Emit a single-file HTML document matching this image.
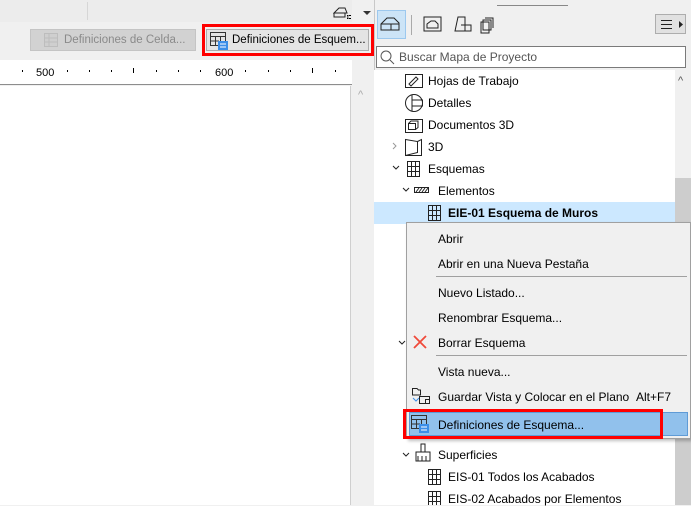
<!DOCTYPE html>
<html><head><meta charset="utf-8"><style>
*{margin:0;padding:0;box-sizing:border-box}
body{width:691px;height:505px;overflow:hidden;background:#f0f0f0;font-family:"Liberation Sans",sans-serif;font-size:12px;color:#000;position:relative}
.a{position:absolute}
.t{position:absolute;white-space:nowrap;line-height:14px}
.tick{position:absolute;top:70px;width:1px;height:2px;background:#000}
.mi{position:absolute;left:438px;white-space:nowrap;line-height:14px}
</style></head><body>
<div class="a" style="left:0;top:0;width:352px;height:22px;background:#ececec"></div>
<div class="a" style="left:87px;top:2px;width:1px;height:18px;background:#d6d6d6"></div>
<svg class="a" style="left:333px;top:4px" width="40" height="16"><path d="M1 9 L6 4 L12 4 L14 9 Z M1 9 V13 H12 V9" fill="none" stroke="#222"/><rect x="14" y="11" width="1.5" height="1.5"/><rect x="14" y="13.5" width="1.5" height="1.5"/><rect x="16" y="11" width="2" height="1"/><rect x="16" y="14" width="2" height="1"/><path d="M30 7 H38 L34 11Z" fill="#333"/></svg>
<div class="a" style="left:30px;top:29px;width:166px;height:22px;background:#d2d2d2;border:1px solid #c4c4c4"></div>
<svg class="a" style="left:44px;top:33px" width="14" height="14"><g fill="#cfcfcf" stroke="#bdbdbd"><rect x="0.5" y="0.5" width="13" height="13"/></g><path d="M0 5H14M0 9H14M5 0V14" stroke="#bdbdbd"/></svg>
<div class="t" style="left:64px;top:33px;color:#8a8a8a;font-size:11.5px">Definiciones de Celda...</div>
<div class="a" style="left:202px;top:24px;width:172px;height:32px;border:3px solid #f00"></div>
<div class="a" style="left:206px;top:29px;width:163px;height:22px;background:#e4e4e4;border:1px solid #adadad"></div>
<svg class="a" style="left:210px;top:32px" width="18" height="18"><rect x="0.5" y="0.5" width="15" height="13" fill="none" stroke="#333"/><path d="M0.5 4.5H15.5M0.5 9H9M5.5 4.5V13.5M10.5 4.5V9" stroke="#333"/><rect x="8" y="9" width="10" height="9" fill="#3b8ee8"/><path d="M10 12H16M10 15H16" stroke="#fff"/></svg>
<div class="t" style="left:232px;top:33px;font-size:11.5px">Definiciones de Esquem...</div>
<div class="a" style="left:0;top:60px;width:352px;height:25px;background:#fff;border-bottom:1px solid #8d8d8d"></div>
<div class="tick" style="left:22px"></div><div class="tick" style="left:67px"></div><div class="tick" style="left:89px"></div><div class="tick" style="left:111px"></div><div class="a" style="left:133px;top:68px;width:1px;height:5px;background:#000"></div><div class="tick" style="left:156px"></div><div class="tick" style="left:178px"></div><div class="tick" style="left:200px"></div><div class="tick" style="left:245px"></div><div class="tick" style="left:268px"></div><div class="tick" style="left:290px"></div><div class="a" style="left:312px;top:68px;width:1px;height:5px;background:#000"></div><div class="tick" style="left:335px"></div>
<div class="t" style="left:36px;top:66px;font-size:11px">500</div>
<div class="t" style="left:215px;top:66px;font-size:11px">600</div>
<div class="a" style="left:0;top:86px;width:351px;height:419px;background:#fff;border-right:1px solid #cfcfcf"></div>
<div class="t" style="left:358px;top:88px;color:#aaa;font-size:11px">^</div>
<div class="a" style="left:374px;top:0;width:317px;height:505px;background:#f0f0f0;border-left:1px solid #c8c8c8"></div>
<div class="a" style="left:497px;top:5px;width:71px;height:1px;background:#888"></div>
<div class="a" style="left:377px;top:10px;width:29px;height:29px;background:#cce4f7;border:1px solid #9cc8ee"></div>
<svg class="a" style="left:380px;top:16px" width="22" height="16"><path d="M1 8L7 2H14L19 7V14H1Z M1 8H19 M11 8V14" fill="none" stroke="#222"/></svg>
<div class="a" style="left:411px;top:15px;width:1px;height:20px;background:#aaa"></div>
<svg class="a" style="left:423px;top:16px" width="80" height="18"><rect x="1" y="1" width="17" height="14" fill="none" stroke="#222"/><path d="M4 12V8L8 5H12L15 8V12Z" fill="none" stroke="#222"/><path d="M32 15L35 1H42V15Z M35 15H48V9H38" fill="none" stroke="#222"/><path d="M60 4H68V14H60Z M62 2H70V12 M58 6H66V17H58Z" fill="#f0f0f0" stroke="#222"/></svg>
<div class="a" style="left:655px;top:14px;width:31px;height:20px;background:#e1e1e1;border:1px solid #adadad"></div>
<svg class="a" style="left:660px;top:19px" width="24" height="12"><path d="M1 1.5H12M1 5.5H12M1 9.5H12" stroke="#222"/><path d="M19 2L23 5.5L19 9Z" fill="#222"/></svg>
<div class="a" style="left:376px;top:46px;width:310px;height:22px;background:#fff;border:1px solid #7a7a7a"></div>
<svg class="a" style="left:380px;top:50px" width="16" height="16"><circle cx="6" cy="6" r="5" fill="none" stroke="#555"/><path d="M10 10L14 14" stroke="#555"/></svg>
<div class="t" style="left:399px;top:50px;color:#555">Buscar Mapa de Proyecto</div>
<div class="a" style="left:374px;top:70px;width:301px;height:435px;background:#fff"></div>
<div class="a" style="left:675px;top:70px;width:16px;height:435px;background:#f0f0f0"></div>
<div class="a" style="left:675px;top:178px;width:16px;height:327px;background:#cdcdcd"></div>
<div class="t" style="left:678px;top:74px;color:#555;font-size:11px">^</div>
<div class="a" style="left:374px;top:202px;width:301px;height:22px;background:#cce8ff"></div>
<svg class="a" style="left:390px;top:70px" width="60" height="435" fill="none" stroke="#222">
<rect x="15.5" y="4.5" width="17" height="13"/><path d="M19 14L26 7L28 9L21 16Z"/>
<circle cx="24" cy="33" r="8.5"/><path d="M22 24.5V41.5M22 30H32.5V36H22"/>
<rect x="15.5" y="49.5" width="17" height="13"/><rect x="18.5" y="53.5" width="7" height="6"/><path d="M18.5 53.5L21 51H28V57.5L25.5 59.5"/>
<path d="M3 73L6 76L3 79" stroke="#999"/><path d="M15.5 69.5L27.5 71.5V82.5L15.5 85.5Z M27.5 71.5L31.5 69.5V85.5L15.5 85.5"/>
<path d="M3 96L6 99L9 96"/><rect x="17.5" y="91.5" width="12" height="15"/><path d="M17.5 96.5H29.5M17.5 101.5H29.5M21.5 91.5V106.5M25.5 91.5V106.5"/>
<path d="M13 118L16 121L19 118"/><rect x="24.5" y="117.5" width="14" height="5"/><path d="M26 122L29 118M29 122L32 118M32 122L35 118M35 122L38 118"/>
<rect x="38.5" y="135.5" width="12" height="15"/><path d="M38.5 140.5H50.5M38.5 145.5H50.5M42.5 135.5V150.5M46.5 135.5V150.5"/>
</svg>
<div class="t" style="left:428px;top:74px">Hojas de Trabajo</div>
<div class="t" style="left:428px;top:96px">Detalles</div>
<div class="t" style="left:428px;top:118px">Documentos 3D</div>
<div class="t" style="left:428px;top:140px">3D</div>
<div class="t" style="left:428px;top:162px">Esquemas</div>
<div class="t" style="left:438px;top:184px">Elementos</div>
<div class="t" style="left:448px;top:206px;font-weight:bold">EIE-01 Esquema de Muros</div>
<svg class="a" style="left:390px;top:440px" width="60" height="65" fill="none" stroke="#222">
<path d="M13 13L16 16L19 13"/><path d="M26 12H40V21H26Z M31 12V4H35V12M28 21V16M32 21V16M36 21V16"/>
<rect x="38.5" y="29.5" width="12" height="15"/><path d="M38.5 34.5H50.5M38.5 39.5H50.5M42.5 29.5V44.5M46.5 29.5V44.5"/>
<rect x="38.5" y="51.5" width="12" height="15"/><path d="M38.5 56.5H50.5M38.5 61.5H50.5M42.5 51.5V66.5M46.5 51.5V66.5"/>
</svg>
<div class="t" style="left:438px;top:448px">Superficies</div>
<div class="t" style="left:448px;top:470px">EIS-01 Todos los Acabados</div>
<div class="t" style="left:448px;top:492px">EIS-02 Acabados por Elementos</div>
<svg class="a" style="left:398px;top:340px" width="10" height="8"><path d="M1 1L4 4L7 1" fill="none" stroke="#222"/></svg>
<div class="a" style="left:406px;top:222px;width:285px;height:217px;background:#f0f0f0;border:1px solid #a0a0a0;box-shadow:2px 2px 3px rgba(0,0,0,.25)"></div>
<div class="mi" style="top:232px">Abrir</div>
<div class="mi" style="top:257px">Abrir en una Nueva Pestaña</div>
<div class="a" style="left:436px;top:276px;width:251px;height:1px;background:#a0a0a0"></div>
<div class="mi" style="top:286px">Nuevo Listado...</div>
<div class="mi" style="top:311px">Renombrar Esquema...</div>
<svg class="a" style="left:413px;top:335px" width="14" height="14"><path d="M1 1L13 13M13 1L1 13" stroke="#f04a3a" stroke-width="1.8"/></svg>
<div class="mi" style="top:336px">Borrar Esquema</div>
<div class="a" style="left:436px;top:355px;width:251px;height:1px;background:#a0a0a0"></div>
<div class="mi" style="top:365px">Vista nueva...</div>
<svg class="a" style="left:411px;top:387px" width="20" height="18" fill="none" stroke="#222"><path d="M1.5 1.5H6L7.5 3H9.5V8H1.5Z"/><path d="M2 11L5 14L8 11" stroke="#3b8ee8"/><rect x="8.5" y="9.5" width="10" height="7"/><rect x="14.5" y="12.5" width="4" height="4"/></svg>
<div class="mi" style="top:390px">Guardar Vista y Colocar en el Plano</div>
<div class="t" style="left:636px;top:390px">Alt+F7</div>
<div class="a" style="left:409px;top:412px;width:279px;height:24px;background:#91c1ec;border:1px solid #5f9bd6"></div>
<div class="a" style="left:403px;top:409px;width:260px;height:30px;border:3px solid #f00"></div>
<svg class="a" style="left:411px;top:415px" width="18" height="18"><rect x="0.5" y="0.5" width="15" height="13" fill="none" stroke="#333"/><path d="M0.5 4.5H15.5M0.5 9H9M5.5 4.5V13.5M10.5 4.5V9" stroke="#333"/><rect x="8" y="9" width="10" height="9" fill="#3b8ee8"/><path d="M10 12H16M10 15H16" stroke="#fff"/></svg>
<div class="mi" style="top:418px">Definiciones de Esquema...</div>
</body></html>
